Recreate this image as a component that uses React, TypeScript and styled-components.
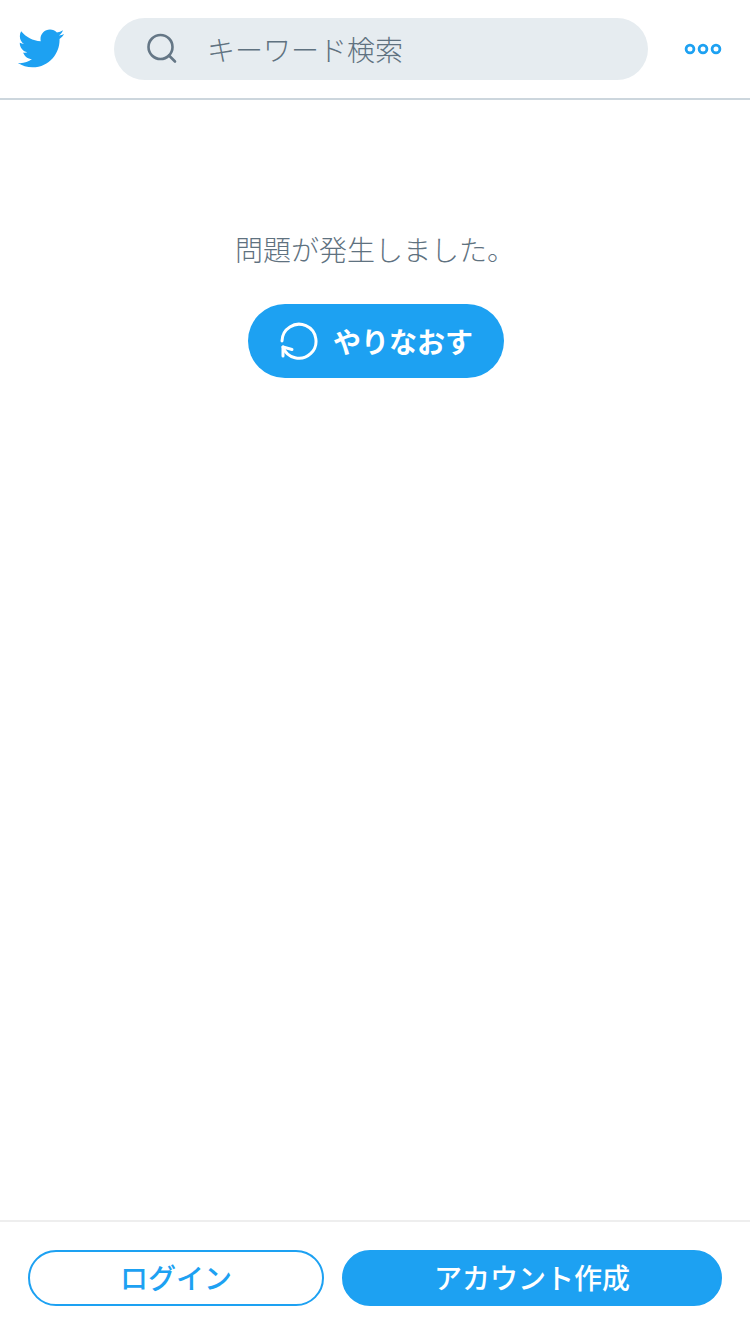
import styled, { createGlobalStyle } from 'styled-components'

const GlobalStyle = createGlobalStyle`
  html, body {
    margin: 0;
    padding: 0;
    background: #fff;
  }
  body {
    font-family: "Noto Sans CJK JP", "Noto Sans", sans-serif;
  }
  * {
    box-sizing: border-box;
  }
`
const Page = styled.div`
  width: 750px;
  height: 1334px;
  display: flex;
  flex-direction: column;
  overflow: hidden;
`
const Header = styled.header`
  height: 100px;
  flex-shrink: 0;
  display: flex;
  align-items: flex-start;
  border-bottom: 2px solid #ccd6dd;
  padding: 18px 28px 0 16px;
`
const Logo = styled.svg`
  width: 49px;
  height: 49px;
  margin: 6px 49px 0 0;
  fill: #1da1f2;
  flex-shrink: 0;
`
const SearchBox = styled.div`
  width: 534px;
  height: 62px;
  border-radius: 31px;
  background: #e6ecf0;
  display: flex;
  align-items: center;
  padding-left: 32px;
  flex-shrink: 0;
`
const SearchIcon = styled.svg`
  width: 32px;
  height: 32px;
  margin-right: 29px;
  margin-top: -2px;
  fill: none;
  stroke: #657786;
  stroke-width: 2.6;
  stroke-linecap: round;
`
const Placeholder = styled.span`
  font-size: 28px;
  font-weight: 300;
  line-height: 62px;
  color: #5f7280;
`
const MoreIcon = styled.svg`
  width: 38px;
  height: 12px;
  margin: 25px 0 0 36px;
  fill: none;
  stroke: #1da1f2;
  stroke-width: 2.8;
  flex-shrink: 0;
`
const Main = styled.main`
  flex: 1;
  display: flex;
  flex-direction: column;
  align-items: center;
  padding-top: 127px;
`
const Message = styled.p`
  margin: 0 0 33px;
  font-size: 28px;
  font-weight: 300;
  line-height: 44px;
  color: #5f7280;
`
const RetryButton = styled.button`
  width: 256px;
  height: 74px;
  margin-left: 2px;
  border: none;
  border-radius: 37px;
  background: #1da1f2;
  color: #fff;
  display: flex;
  align-items: center;
  justify-content: center;
  gap: 15px;
  padding: 0 0 0 1px;
  font-family: inherit;
  font-size: 28px;
  font-weight: 700;
`
const RetryIcon = styled.svg`
  width: 38px;
  height: 38px;
  fill: none;
  stroke: #fff;
  stroke-width: 3;
  stroke-linecap: round;
  stroke-linejoin: round;
`
const Footer = styled.footer`
  height: 114px;
  flex-shrink: 0;
  display: flex;
  gap: 18px;
  border-top: 2px solid #eeeeee;
  padding: 28px 28px 0;
`
const PillButton = styled.button<{ $primary?: boolean }>`
  height: 56px;
  width: ${props => (props.$primary ? '380px' : '296px')};
  border: 2px solid #1da1f2;
  border-radius: 28px;
  background: ${props => (props.$primary ? '#1da1f2' : '#fff')};
  color: ${props => (props.$primary ? '#fff' : '#1da1f2')};
  padding: 0 0 3px;
  font-family: inherit;
  font-size: 28px;
  font-weight: 500;
  line-height: 1;
`

const App = (): JSX.Element => {
  return (
    <Page>
      <GlobalStyle />
      <Header>
        <Logo viewBox="0 0 24 24">
          <path d="M23.643 4.937c-.835.37-1.732.62-2.675.727.962-.576 1.7-1.49 2.048-2.578-.9.534-1.897.922-2.958 1.13-.85-.904-2.06-1.47-3.4-1.47-2.572 0-4.658 2.086-4.658 4.66 0 .364.042.718.12 1.06-3.873-.195-7.304-2.05-9.602-4.868-.4.69-.63 1.49-.63 2.342 0 1.616.823 3.043 2.072 3.878-.764-.025-1.482-.234-2.11-.583v.06c0 2.257 1.605 4.14 3.737 4.568-.392.106-.803.162-1.227.162-.3 0-.593-.028-.877-.082.593 1.85 2.313 3.198 4.352 3.234-1.595 1.25-3.604 1.995-5.786 1.995-.376 0-.747-.022-1.112-.065 2.062 1.323 4.51 2.093 7.14 2.093 8.57 0 13.255-7.098 13.255-13.254 0-.2-.005-.402-.014-.602.91-.658 1.7-1.477 2.323-2.41z" />
        </Logo>
        <SearchBox>
          <SearchIcon viewBox="0 0 32 32">
            <circle cx="14.5" cy="15" r="12" />
            <path d="M23 23.5L29 29.5" />
          </SearchIcon>
          <Placeholder>キーワード検索</Placeholder>
        </SearchBox>
        <MoreIcon viewBox="0 0 38 12">
          <circle cx="6" cy="6" r="3.9" />
          <circle cx="19" cy="6" r="3.9" />
          <circle cx="32" cy="6" r="3.9" />
        </MoreIcon>
      </Header>
      <Main>
        <Message>問題が発生しました。</Message>
        <RetryButton>
          <RetryIcon viewBox="0 0 38 38">
            <path d="M2 19A17 17 0 1 1 3 25" />
            <path d="M3 34V25L12 27.5" />
          </RetryIcon>
          やりなおす
        </RetryButton>
      </Main>
      <Footer>
        <PillButton>ログイン</PillButton>
        <PillButton $primary>アカウント作成</PillButton>
      </Footer>
    </Page>
  )
}

export default App
